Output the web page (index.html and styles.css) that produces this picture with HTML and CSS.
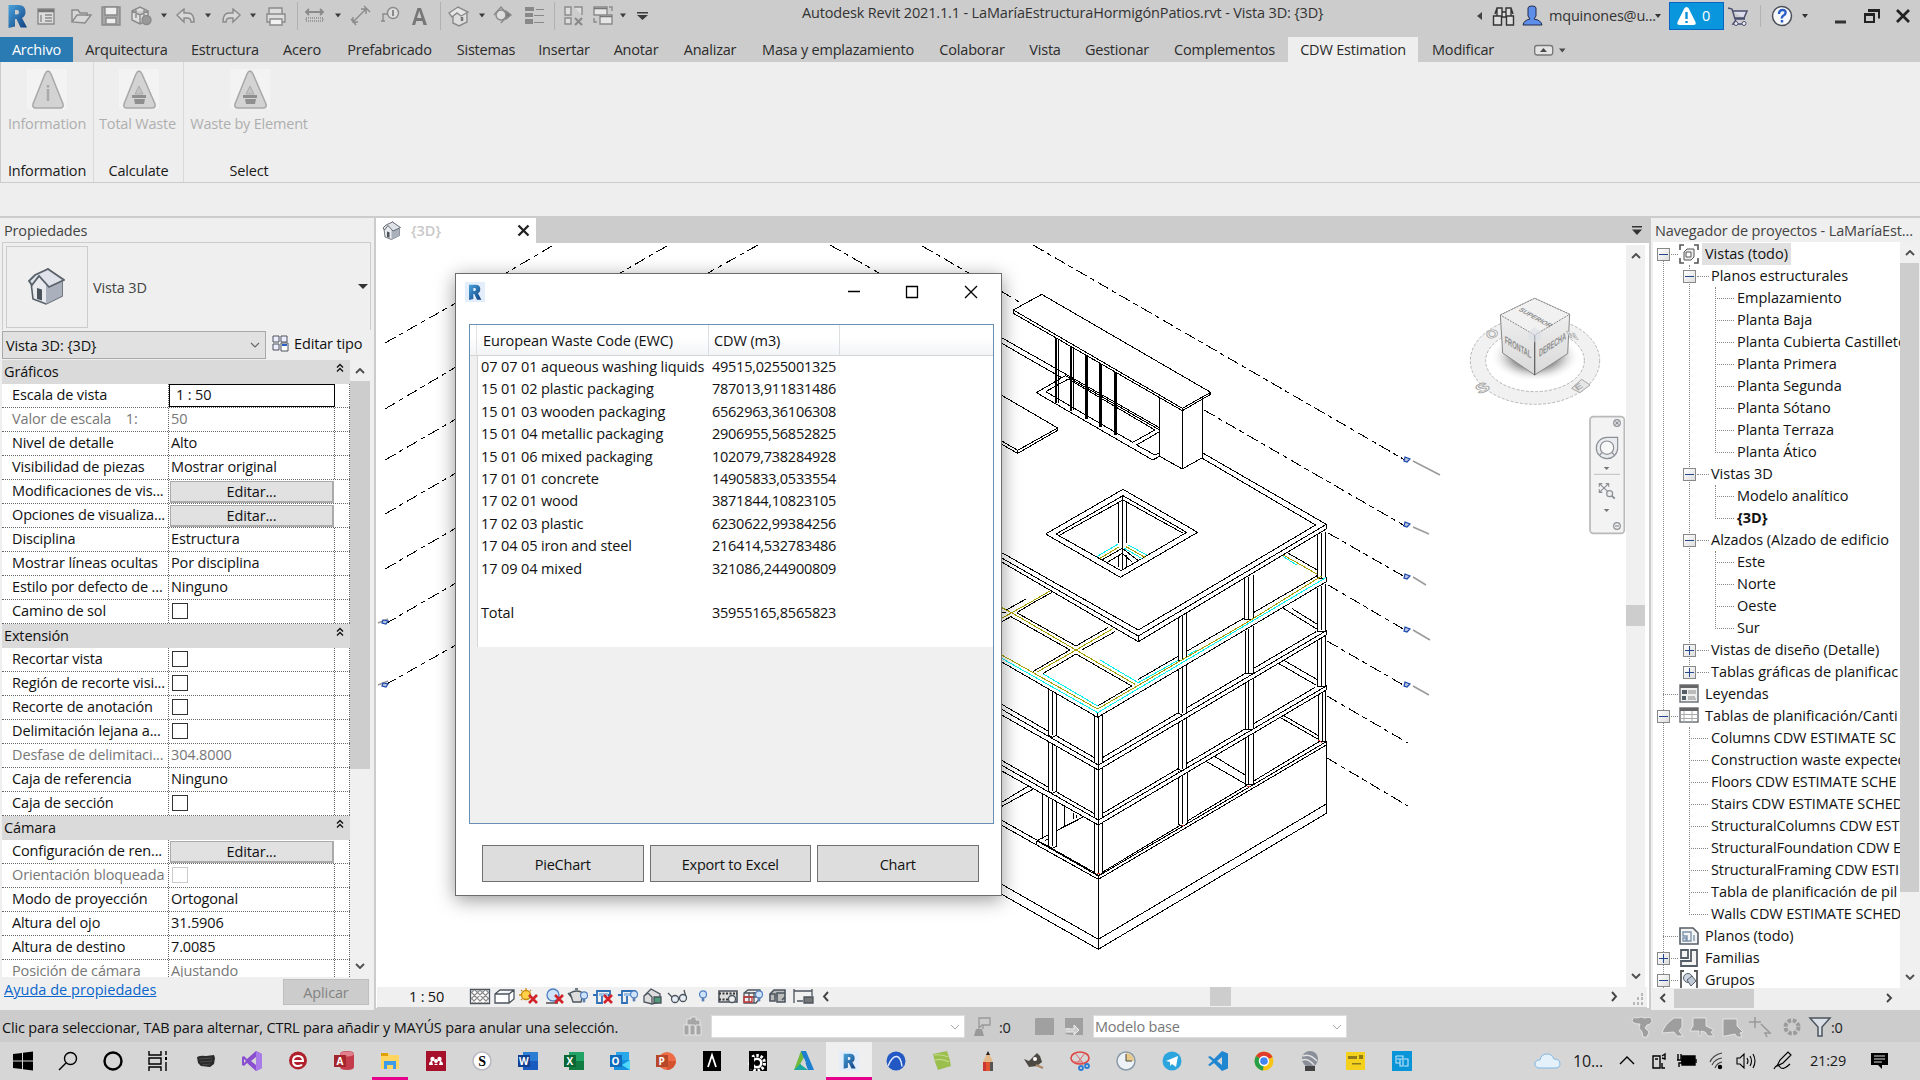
FILE: index.html
```html
<!DOCTYPE html>
<html lang="es">
<head>
<meta charset="utf-8">
<title>Autodesk Revit 2021.1.1</title>
<link rel="stylesheet" href="styles.css">
</head>
<body>
<svg width="0" height="0" class="defs">
  <defs>
    <linearGradient id="rg" x1="0" y1="0" x2="1" y2="1"><stop offset="0" stop-color="#4aa3dc"/><stop offset="1" stop-color="#0f3f80"/></linearGradient>
    <symbol id="rlogo" viewBox="0 0 20 24"><path fill="url(#rg)" fill-rule="evenodd" d="M1 1h10q7 0 7 7 0 4-3.500 6l5 9.500h-6.500l-4-8.500H7.500v7.500l-6.500 1.500zM7.500 6v4.500h2q2 0 2-2.200T9.500 6z"/></symbol>
    <symbol id="house" viewBox="0 0 38 38"><path d="M4 15 6 32 19 37 35 29V15L21 2Z" fill="#e8eaee" stroke="#555d66" stroke-width="1.600"/><path d="M19 18 35 14V29L19 37Z" fill="#aab1bc"/><path d="M10 21l5 1.500v11L10 32z" fill="#4a525c"/><path d="M2 14 8 8 21 2 37 13 22 20 12 9 5 18Z" fill="#dfe2e8" stroke="#59616a" stroke-width="1.800"/></symbol>
    <symbol id="waste" viewBox="0 0 40 40"><path fill="#f3f3f3" d="M0 0h40v40H0z"/><path d="M20 2q1.500 0 3 3l13 30q1 4-3 4H8q-4 0-3-4L17 5q1.500-3 3-3z" fill="#d3d3d3" stroke="#a8a8a8" stroke-width="1.500"/><path d="m16 25 4-8 4 8z" fill="#c2c2c2" stroke="#aaa"/><path fill="#8f8f8f" d="M13 26h14v3H13zM15 30h11l-1 5h-9z"/></symbol>
    <symbol id="up" viewBox="0 0 10 6"><path d="M1 5 5 1 9 5" fill="none" stroke="#505050" stroke-width="1.900"/></symbol>
    <symbol id="dn" viewBox="0 0 10 6"><path d="M1 1 5 5 9 1" fill="none" stroke="#505050" stroke-width="1.900"/></symbol>
    <symbol id="dbl" viewBox="0 0 8 10"><path d="M1 4.500 4 1.500 7 4.500M1 8.500 4 5.500 7 8.500" fill="none" stroke="#111" stroke-width="1.400"/></symbol>
    <symbol id="bulb" viewBox="0 0 10 16"><circle cx="5" cy="5" r="4" fill="#cfe4fb" stroke="#4d7fc0" stroke-width="1.300"/><path d="M3.500 9h3v4h-3z" fill="#5a7fb0"/></symbol>
    <symbol id="redx" viewBox="0 0 10 10"><path d="M1 1 9 9M9 1 1 9" stroke="#d2232a" stroke-width="2.600"/></symbol>
  </defs>
</svg>

<div class="app">
<header class="titlebar">
  <svg class="quick" width="660" height="37">
    <use href="#rlogo" x="7" y="4" width="21" height="24"/>
    <g fill="none" stroke="#8a8a8a" stroke-width="1.400">
      <path d="M38 9h16v15H38z" fill="#ddd"/><path d="M38 10h16M38 11.500h16" stroke="#777"/><path d="M41 15v7M45 15h7M45 18h7M45 21h7"/>
      <path d="M72 22V10h6l2 3h7v3M72 22l5-7h14l-6 8z" fill="#d8d8d8"/>
      <path d="M102 7h18v18h-18z" fill="#a6a6a6"/><path d="M105 7h12v8h-12zM106 18h10v6h-10z" fill="#eee"/>
      <path d="M132 11l8-4 8 4v9l-8 4-8-4zM132 11l8 4 8-4M140 15v9M136 9v9M144 9v9" fill="#dedede"/><circle cx="146.500" cy="20" r="4.500" fill="#999"/>
      <path d="M177 15l7-6v4h4q6 0 6 9h-3q0-4-4-4h-3v4z" fill="#d8d8d8"/>
      <path d="M240 15l-7-6v4h-4q-6 0-6 9h3q0-4 4-4h3v4z" fill="#d8d8d8"/>
      <path d="M269 14V8h13v6M267 14h18v8h-18z" fill="#ddd"/><path d="M270 19h12v6h-12z" fill="#f2f2f2"/>
      <path d="M306 12h17M309 9l-3 3 3 3M320 9l3 3-3 3" stroke-width="1.800"/><path d="M306 18h17v3h-17z" stroke-dasharray="1 1" fill="#ccc"/>
      <path d="M354 21l11-11M353 17v5h5M361 9h5v5M351 19l5 6M364 6l6 6"/>
      <circle cx="393" cy="13" r="5.500" fill="#ddd"/><path d="M388 14h-5v7M381 21h4"/><path d="M393 10v6" stroke="#666"/>
      <path d="M453 15v8l6 3 8-4v-9" fill="#ddd"/><path d="M449 13l9-6 10 5-7 4-4-3-5 4z" fill="#e6e6e6"/><path d="M462 17v4" stroke="#777" stroke-width="2.500"/>
      <circle cx="501" cy="15" r="5" fill="#ddd"/><path d="M494 15l7-8 7 8-7 8" /><path d="M506 11l5 4-5 4z" fill="#777"/>
      <path d="M565 7h6v8h-6zM574 7h8v8M565 18h6v6h-6z" fill="#ddd"/><path d="M575 18l7 7M582 18l-7 7" stroke-width="2.200"/>
      <path d="M594 7h13v8h-13zM600 15h12v9h-12z" fill="#e6e6e6"/><path d="M594 8.500h13M600 16.500h12" stroke="#777"/><path d="M609 7h3v4M597 22h-3v-4"/>
    </g>
    <path d="M412 25 417.500 8h3.500l6 17h-3.500l-1.200-4h-6l-1.200 4zM417 18h4.500l-2.200-7z" fill="#777" fill-rule="evenodd"/>
    <path d="M525 7h9v4h-9zM525 13h8v4h-8zM525 19h8v5h-8zM536 9h8v1h-8zM534 15h10v1h-10zM534 22h10v1h-10z" fill="#888"/>
    <path d="M297.500 2v28M440.500 2v28M554.500 2v28" stroke="#b0b0b0"/>
    <path d="M161 13.500h6l-3 4zM205 13.500h6l-3 4zM250 13.500h6l-3 4zM335 13.500h6l-3 4zM479 13.500h6l-3 4zM620 13.500h6l-3 4zM637 15h11l-5.500 5zM637 12h11v1.500h-11z" fill="#3c3c3c"/>
  </svg>
  <div class="apptitle">Autodesk Revit 2021.1.1 - LaMaríaEstructuraHormigónPatios.rvt - Vista 3D: {3D}</div>
  <svg class="find" width="68" height="37">
    <path d="M6 12v8l-5-4z" fill="#444"/>
    <g fill="#ddd" stroke="#333" stroke-width="1.400"><path d="M19 14l2-6h5v8M37 14l-2-6h-5v8M26 12h4v5h-4zM17.500 16h8v9h-8zM30.500 16h7v9h-7zM21 9v7M35 9v7"/></g>
    <path d="M47 25q1-5 7-6l-2-3V8q0-2 4-2t4 2v8l-2 3q7 1 8 6z" fill="#5d8eea" stroke="#222b4a"/>
  </svg>
  <div class="user">mquinones@u...</div><i class="caret"></i>
  <div class="alert"><svg width="21" height="20"><path d="M10.500 1q2 0 3 3l6 12q1 3-2 3h-14q-3 0-2-3l6-12q1-3 3-3z" fill="#fff"/><path d="M10.500 6v7M10.500 15v2" stroke="#0a92d8" stroke-width="2.400"/></svg><span>0</span></div>
  <svg class="sys" width="195" height="37">
    <path d="M4 8l4 1 3 10h10M8 11h15l-3 7h-9M12 20l-3 4h12" fill="#dde" stroke="#4a4f6e" stroke-width="1.500"/><circle cx="12" cy="23.500" r="2" fill="#eee" stroke="#4a4f6e"/><circle cx="20" cy="23.500" r="2" fill="#eee" stroke="#4a4f6e"/>
    <path d="M36.500 5v22" stroke="#b3b3b3"/>
    <circle cx="58" cy="16" r="9.500" fill="#f6f8fc" stroke="#4b4f57" stroke-width="1.500"/><path d="M55 14q0-4 3.500-4t3 3q0 1.500-2 2.500t-1.500 3M58 20v2.500" fill="none" stroke="#2a5fc8" stroke-width="2.400"/>
    <path d="M78 14h6l-3 4zM111 20.500h11v3h-11z" fill="#333"/>
    <path d="M145 10.500h10v8M141 14.500h9v7.500h-9z" fill="none" stroke="#222" stroke-width="2"/><path d="M144 9h12v3h-12zM140 13h11v3h-11z" fill="#222"/>
    <path d="M173 10l12 12M185 10l-12 12" stroke="#222" stroke-width="2.800"/>
  </svg>
</header>

<nav class="tabs">
  <a class="t-file">Archivo</a><a>Arquitectura</a><a>Estructura</a><a>Acero</a><a>Prefabricado</a><a>Sistemas</a><a>Insertar</a><a>Anotar</a><a>Analizar</a><a>Masa y emplazamiento</a><a>Colaborar</a><a>Vista</a><a>Gestionar</a><a>Complementos</a><a class="t-on">CDW Estimation</a><a>Modificar</a>
  <svg width="60" height="25"><rect x="26.700" y="8.500" width="18" height="9.500" rx="2.500" fill="#e4e4e4" stroke="#777" stroke-width="1.300"/><path d="M32 15h7l-3.500-4zM51 11.500h6.500l-3.200 4z" fill="#4a4a4a"/></svg>
</nav>

<section class="ribbon">
  <div class="panels">
    <div class="rp rp1"><svg width="40" height="40"><path fill="#f3f3f3" d="M0 0h40v40H0z"/><path d="M21 2q1.500 0 3 3l12 30q1 4-3 4H9q-4 0-3-4L18 5q1.500-3 3-3z" fill="#d3d3d3" stroke="#a8a8a8" stroke-width="1.500"/><path d="M21 20v12M21 16v2.500" stroke="#aaa" stroke-width="2.500"/></svg><span>Information</span><b>Information</b></div>
    <div class="rp rp2"><svg width="40" height="40"><use href="#waste"/></svg><span>Total Waste</span><b>Calculate</b></div>
    <div class="rp rp3"><svg width="40" height="40"><use href="#waste"/></svg><span>Waste by Element</span><b>Select</b></div>
  </div>
</section>

<main class="work">
<aside class="props">
  <h2>Propiedades</h2>
  <div class="typesel"><div class="thumb"><svg width="38" height="38"><use href="#house"/></svg></div><span>Vista 3D</span><i class="caret"></i></div>
  <div class="inst"><div class="combo">Vista 3D: {3D}<svg width="10" height="6"><path d="M1 1 5 5 9 1" fill="none" stroke="#666" stroke-width="1.100"/></svg></div>
    <svg width="17" height="17"><path d="M1 1h6v6H1zM9 1h6v6H9zM1 9h6v6H1z" fill="#eef" stroke="#4a525c"/><path d="M9 8h7v8H9z" fill="#fff" stroke="#4a525c"/><path d="M10 10h5" stroke="#2a5fc8" stroke-width="2"/></svg><span>Editar tipo</span></div>
  <div class="gridwrap">
    <div class="grid">
      <div class="gh">Gráficos<svg width="8" height="10"><use href="#dbl"/></svg></div>
      <div class="pr"><span>Escala de vista</span><em class="edit">1 : 50</em></div>
      <div class="pr dim"><span>Valor de escala &nbsp;&nbsp; 1:</span><em>50</em></div>
      <div class="pr"><span>Nivel de detalle</span><em>Alto</em></div>
      <div class="pr"><span>Visibilidad de piezas</span><em>Mostrar original</em></div>
      <div class="pr"><span>Modificaciones de vis...</span><em class="btn">Editar...</em></div>
      <div class="pr"><span>Opciones de visualiza...</span><em class="btn">Editar...</em></div>
      <div class="pr"><span>Disciplina</span><em>Estructura</em></div>
      <div class="pr"><span>Mostrar líneas ocultas</span><em>Por disciplina</em></div>
      <div class="pr"><span>Estilo por defecto de ...</span><em>Ninguno</em></div>
      <div class="pr"><span>Camino de sol</span><em><i class="chk"></i></em></div>
      <div class="gh">Extensión<svg width="8" height="10"><use href="#dbl"/></svg></div>
      <div class="pr"><span>Recortar vista</span><em><i class="chk"></i></em></div>
      <div class="pr"><span>Región de recorte visi...</span><em><i class="chk"></i></em></div>
      <div class="pr"><span>Recorte de anotación</span><em><i class="chk"></i></em></div>
      <div class="pr"><span>Delimitación lejana a...</span><em><i class="chk"></i></em></div>
      <div class="pr dim"><span>Desfase de delimitaci...</span><em>304.8000</em></div>
      <div class="pr"><span>Caja de referencia</span><em>Ninguno</em></div>
      <div class="pr"><span>Caja de sección</span><em><i class="chk"></i></em></div>
      <div class="gh">Cámara<svg width="8" height="10"><use href="#dbl"/></svg></div>
      <div class="pr"><span>Configuración de ren...</span><em class="btn">Editar...</em></div>
      <div class="pr dim"><span>Orientación bloqueada</span><em><i class="chk"></i></em></div>
      <div class="pr"><span>Modo de proyección</span><em>Ortogonal</em></div>
      <div class="pr"><span>Altura del ojo</span><em>31.5906</em></div>
      <div class="pr"><span>Altura de destino</span><em>7.0085</em></div>
      <div class="pr dim"><span>Posición de cámara</span><em>Ajustando</em></div>
    </div>
    <div class="vs pvs"><svg width="10" height="6"><use href="#up"/></svg><div class="thumbbar"></div><svg width="10" height="6"><use href="#dn"/></svg></div>
  </div>
  <div class="pfoot"><a>Ayuda de propiedades</a><div class="apply">Aplicar</div></div>
</aside>

<section class="center">
  <div class="vtabs"><div class="vtab"><svg width="19" height="19"><use href="#house"/></svg><span>{3D}</span><svg width="13" height="13"><path d="M1.500 1.500l10 10M11.500 1.500l-10 10" stroke="#222" stroke-width="2.300"/></svg></div><svg width="12" height="10"><path d="M1 0h10v1.500H1zM1 3.500h10L6 9z" fill="#333"/></svg></div>
  <div class="viewrow">
    <svg class="model" width="1250" height="744" viewBox="376 243 1250 744">
      <g class="axis" fill="none" stroke="#000">
        <path d="M552 246 506 273M667 246 620 273M758 245 708 273M830 245 879 273M922 246 969 273M385 343 456 303M385 409 456 367M385 460 456 419M385 514 456 473M385 569 456 528M385 624 456 583M385 685 456 645"/>
        <path d="M1001 291 1019 302M1033 245 1405 460M1204 410 1405 526M1328 533 1405 577M1328 585 1405 630M1327 641 1405 686M1327 696 1408 743M1327 758 1408 806"/>
      </g>
      <g stroke="#9a9a9a" stroke-width="1.500"><path d="M1413 461 1440 475M1413 527 1429 534M1413 577 1426 585M1413 630 1430 640M1413 686 1429 695M378 623 388 619M378 685 388 681"/></g>
      <g stroke="#1d49b0" stroke-width="1.200" fill="#b9c4dc"><path d="M1405 457l5 2-3 3-3-1zM1405 522l5 2-3 3-3-1zM1405 574l5 2-3 3-3-1zM1405 627l5 2-3 3-3-1zM1405 682l5 2-3 3-3-1zM383 620l5 1-2 3-4-1zM383 683l5 1-2 3-4-1z"/></g>

      <!-- frame below the roof -->
      <g class="ln" transform="translate(1000 600) scale(.33333)">
        <path d="M850 25 952 88M875 25 952 73M835 190 948 255M850 180 950 238M840 352 955 418M852 347 957 408M620 485 735 551M645 470 735 525M865 -140 952 -90"/>
        <path d="M0 610 85 558M0 622 100 567M128 583V718M193 620V680M222 640V658M230 645V655M110 722 252 650M135 722 145 716"/>
        <path class="yl" d="M0 20 33 37 228 150 405 253M5 55 98 3 150 -27M340 85 228 150 110 217M850 -135 952 -77"/>
        <path d="M18 30 33 22 78 -3M50 38 105 5 155 -22M5 65 33 50 210 150 98 215M50 38 228 138 325 82M130 220 228 162 395 258 293 318M245 150 345 95M0 37 18 37"/>
        <path class="cy" d="M130 222 293 318M300 180 415 248 545 175M850 -130 890 -105M565 165 590 150"/>
        <path d="M0 310 295 480 948 95M0 478 295 648 945 262M0 658 295 824 957 425M415 238 955 -75"/>
        <path class="col" d="M283 340V490L295 497 308 490V340M283 500V655L295 662 308 655V500M283 665V820L295 826 308 820V665M145 262V405L157 412 170 405V262M145 425V573L157 580 170 573V425M145 585V738L157 745 170 738V585"/>
        <path class="col" d="M535 40V183H560V40M535 192V340L547 346 560 340V192M535 350V508L547 513 560 508V350M535 512V672L547 678 562 672V505M733 -75V60H760V-75M736 68V220H760V68M736 235V388H760V235M736 400V555H760V400M952 -205V-65H976V-205M952 -50V95H976V-50M952 105V260H976V105M956 270V425H976V270"/>
        <path d="M295 345V820M157 275V405M157 428V573M157 590V738M547 45V180M547 195V340M547 355V508M547 520V672M747 -70V58M747 75V218M747 238V386M747 400V552M965 -200V-65M965 -50V90M965 105V260M967 270V425"/>
        <path fill="#fff" stroke="none" d="M0 162 293 327 979 -67V-50L293 352 0 183ZM0 325 295 495 979 92V107L295 510 0 342ZM0 493 295 660 979 258V272L295 675 0 510Z"/>
        <path d="M0 183 293 352 979 -55V-68M293 340V352M0 325 295 495 979 92V105L295 510 0 342M295 495V510M0 493 295 660 979 258V270L295 675 0 510M295 660V675"/>
        <path class="yl" d="M0 162 293 327 540 183 733 72 965 -72"/>
        <path class="cy" d="M0 172 293 338 979 -68"/>
        <path d="M0 673 110 735V722M110 735 295 838 979 435M110 722 295 828 979 425V640L295 1048 0 880M0 850 295 1018 979 612M295 828V1048"/>
        <path class="rd" d="M292 822h8M545 676h8M742 560h8M955 420l12 8"/>
      </g>

      <!-- roof slab, skylight and lift tower -->
      <g class="ln" transform="translate(1000 230) scale(.33333)">
        <path fill="#fff" stroke="none" d="M0 350 560 645 979 883V897L415 1235 0 993Z"/>
        <path d="M979 883V897L415 1235 0 993M0 965 415 1200 947 885 607 685M979 883 415 1218 0 981M415 1218V1235M610 670 979 883M0 337 185 443"/>
        <path d="M0 493 173 594V601L53 670 0 640M173 594 53 661 0 630M53 661V670"/>
        <path fill="#fff" d="M109 488 196 437 479 600V679L458 690Z"/>
        <path d="M137 485 205 447 465 600 398 637M137 485 398 637M479 605 410 645 465 675 479 668"/>
        <path d="M0 320 480 594"/>
        <path fill="#fff" stroke="none" d="M480 480H606V690L547 716 480 678Z"/>
        <path d="M479 500V679L547 717 607 683V505M547 535V717"/>
        <path class="post" d="M169 325V520M214 350V542M257 376V568M299 400V592M344 424V616"/>
        <path d="M175 325V518M220 350V540M262 376V566M305 400V590M350 424V614"/>
        <path fill="#fff" d="M40 240 125 193 632 487V493L547 542 40 250Z"/><path d="M40 240 547 535 632 487M547 535V717"/>
        <path d="M137 912 369 778 593 907 361 1042ZM168 912 369 797 560 907 363 1022ZM180 915 369 810 548 909M355 815V940M367 797V1020M380 815V940M355 975V1012M380 975V1012M305 990 367 955 412 990M320 998 367 970 395 995"/>
        <path class="cy" d="M290 980 355 942M373 955 425 985M385 945 440 975"/><path class="yl" d="M300 985 357 951M378 950 435 982"/>
      </g>

      <!-- view cube -->
      <g transform="translate(1400 215) scale(.33333)">
        <defs><radialGradient id="sh"><stop offset=".5" stop-color="#999"/><stop offset="1" stop-color="#fff" stop-opacity="0"/></radialGradient><linearGradient id="fc" x1="0" y1="0" x2="0" y2="1"><stop offset="0" stop-color="#f4f4f4"/><stop offset="1" stop-color="#d9d9d9"/></linearGradient></defs>
        <ellipse cx="405" cy="437" rx="194" ry="131" fill="#f1f1f1" stroke="#b5b5b5" stroke-width="3" stroke-dasharray="9 5"/>
        <ellipse cx="405" cy="437" rx="148" ry="93" fill="#fff" stroke="#b5b5b5" stroke-width="3" stroke-dasharray="9 5"/>
        <ellipse cx="405" cy="425" rx="135" ry="75" fill="url(#sh)"/>
        <path d="M301 300 404 250 509 298 503 416 404 480 308 414Z" fill="url(#fc)" stroke="#888" stroke-width="3"/>
        <path d="M301 300 404 250 509 298 404 360Z" fill="#f1f1f1" stroke="#888" stroke-width="3" stroke-dasharray="6 3"/><path d="M404 360V480" stroke="#666" stroke-width="4"/>
        <path d="M404 337l20 14-2 22-18 9-18-9-2-22z" fill="#d9dde4" opacity=".6"/>
        <g class="cube" fill="#8d8d8d"><text transform="matrix(.9 .5 -.85 .6 354 286)">SUPERIOR</text><text transform="matrix(.85 .5 0 1.600 314 384)">FRONTAL</text><text transform="matrix(.82 -.54 0 1.600 417 426)">DERECHA</text></g>
        <g class="comp" fill="#fff" stroke="#a5a5a5" stroke-width="2.500"><text transform="matrix(1.300 -.6 .6 .8 238 538)">S</text><text transform="matrix(1 -.5 .5 .7 268 374)">O</text><text transform="matrix(1 .3 .4 .7 508 367)">N</text></g>
        <path d="M515 520 545 493 570 510 540 533Z" fill="#e6e6e6" stroke="#a5a5a5" stroke-width="3"/><text class="comp" transform="matrix(.7 -.45 .4 .5 532 528)" fill="#aaa">E</text>
      </g>
      <!-- navigation bar -->
      <g transform="translate(1400 215) scale(.33333)" fill="none" stroke="#8c9096" stroke-width="3.500">
        <rect x="570" y="605" width="103" height="350" rx="10" fill="#f3f3f3" stroke="#b9b9b9" stroke-width="5"/>
        <circle cx="651" cy="624" r="10" fill="#eee"/><path d="M646 619l10 10M656 619l-10 10"/>
        <path d="M621 667H653V700A32 32 0 1 1 621 667Z" fill="#e9ebee"/><circle cx="621" cy="698" r="20" fill="#f7f7f7"/><path d="M607 712l-8 8M635 712l8 8"/>
        <path d="M582 778h78" stroke="#c5c5c5"/><path d="M611 756h17l-8 9zM611 882h17l-8 9z" fill="#777" stroke="none"/>
        <path d="M598 806l28 26M626 806l-28 26M598 815v-9h9M617 806h9v9M598 823v9h9"/><circle cx="629" cy="836" r="9" fill="#eee"/><path d="M635 842l9 9" stroke-width="6"/>
        <circle cx="651" cy="933" r="10" fill="#eee"/><path d="M645 933h12"/>
      </g>
    </svg>
    <div class="vs cvs"><svg width="10" height="6"><use href="#up"/></svg><div class="thumbbar"></div><svg width="10" height="6"><use href="#dn"/></svg></div>
  </div>
  <div class="vctl">
    <span>1 : 50</span>
    <svg width="380" height="20" viewBox="466 987 380 20">
      <g fill="none" stroke="#4c545e" stroke-width="1.300">
        <path d="M470.500 989.500h19v14h-19z" fill="#fff"/><path d="M471 993l3-3M471 999l9-9M472 1003l13-13M478 1003l11-11M484 1003l5-5M489 993l-3-3M489 999l-9-9M488 1003l-13-13M482 1003l-11-11M476 1003l-5-5" stroke="#888" stroke-width="1.100"/>
        <path d="M495 994l5-4h14v9l-5 4h-14zM495 994h14l5-4M509 994v9" fill="#fff"/>
        <circle cx="526" cy="995" r="4.500" fill="#ffd24a" stroke="#c98a12"/><path d="M526 988v2M519 995h2M521 990l1 1M531 990l-1 1M521 1000l1-1" stroke="#c98a12"/>
        <circle cx="553" cy="995" r="6" fill="#cfe4fb" stroke="#4d7fc0"/><path d="M546 1003h12" stroke="#777" stroke-width="2"/>
        <path d="M570 993l3 9h8l2-9q-6-4-13 0zM575 989h3M568 993l4 5" fill="#ddd"/>
        <path d="M593 995h4v8h5v-8h7v6M597 995v-4h13v4" stroke="#2f6fb5" stroke-width="1.800"/><path d="M599 993h9v3h-9z" fill="#9cc0e6" stroke="none"/>
        <path d="M618 995h4v8h5v-8h7v6M622 995v-4h13v4" stroke="#2f6fb5" stroke-width="1.800"/><path d="M624 993h8v3h-8z" fill="#9cc0e6" stroke="none"/>
        <path d="M644 996l7-7 9 5v8l-8 2-8-2zM644 996l4-3 4 4v6" fill="#ddd"/><path d="M654 997h7v6h-7z" fill="#4d9a78"/>
        <path d="M668 993l6 6M684 990l2 7"/><circle cx="675" cy="999" r="3.500" fill="#e8eef5"/><circle cx="683" cy="998" r="3.500" fill="#e8eef5"/>
        <path d="M719 991h18v11h-18z" fill="#ddd" stroke-width="1.600"/><path d="M719 993.500h18M719 999.500h10" stroke="#333" stroke-dasharray="2 1.500" stroke-width="2"/><circle cx="732" cy="999" r="3.500" fill="#eee"/>
        <path d="M744 993l4-3h12v8l-4 5h-12zM744 997h14M749 992v11M754 992v11M744 993h14"/><path d="M744 997h8v5h-8z" stroke="#c33"/>
        <path d="M770 994l4-4h11v7l-3 3M770 994h5v7h-5zM777 993h8v9h-8z" fill="#bbb" stroke-width="1.600"/>
        <path d="M794 989v14M812 989v7M794 991h18M797 1001h6" /><path d="M804 997h9v6h-9z" fill="#777"/>
      </g>
      <use href="#redx" x="528" y="994" width="10" height="10"/><use href="#redx" x="554" y="994" width="10" height="10"/><use href="#redx" x="603" y="994" width="10" height="10"/>
      <use href="#bulb" x="579" y="991" width="10" height="14"/><use href="#bulb" x="629" y="990" width="10" height="14"/><use href="#bulb" x="698" y="990" width="10" height="14"/><use href="#bulb" x="754" y="990" width="10" height="14"/>
      <path d="M828 992l-4 4.500 4 4.500" fill="none" stroke="#444" stroke-width="1.900"/>
    </svg>
    <div class="hthumb"></div>
    <svg class="hr" width="34" height="20"><path d="M2 5l4 4.500-4 4.500" fill="none" stroke="#444" stroke-width="1.900"/><path d="M31 6h2v3h-2zM27 10h2v3h-2zM31 10h2v3h-2zM23 15h2v3h-2zM27 15h2v3h-2zM31 15h2v3h-2z" fill="#b8b8b8"/></svg>
  </div>
</section>

<aside class="browser">
  <h2>Navegador de proyectos - LaMaríaEst...</h2>
  <div class="trow">
  <ul class="tree">
    <li><p><i class="bx"></i><u></u><svg width="20" height="20"><path d="M1 6V1h4M15 1h4v5M1 14v5h4M19 14v5h-4" fill="none" stroke="#555" stroke-width="1.600"/><path d="M5 8l3-3h7v8l-3 3H5z" fill="#eee" stroke="#555"/><path d="M7 8h5v5H7z" fill="#fff" stroke="#555"/></svg><span class="sel">Vistas (todo)</span></p>
      <ul>
        <li><p><i class="bx"></i><u></u><span>Planos estructurales</span></p>
          <ul><li><p><u></u>Emplazamiento</p></li><li><p><u></u>Planta Baja</p></li><li><p><u></u>Planta Cubierta Castillete</p></li><li><p><u></u>Planta Primera</p></li><li><p><u></u>Planta Segunda</p></li><li><p><u></u>Planta Sótano</p></li><li><p><u></u>Planta Terraza</p></li><li><p><u></u>Planta Ático</p></li></ul></li>
        <li><p><i class="bx"></i><u></u><span>Vistas 3D</span></p>
          <ul><li><p><u></u>Modelo analítico</p></li><li><p><u></u><strong>{3D}</strong></p></li></ul></li>
        <li><p><i class="bx"></i><u></u><span>Alzados (Alzado de edificio</span></p>
          <ul><li><p><u></u>Este</p></li><li><p><u></u>Norte</p></li><li><p><u></u>Oeste</p></li><li><p><u></u>Sur</p></li></ul></li>
        <li><p><i class="bx pl"></i><u></u><span>Vistas de diseño (Detalle)</span></p></li>
        <li><p><i class="bx pl"></i><u></u><span>Tablas gráficas de planificac</span></p></li>
      </ul></li>
    <li><p><u class="long"></u><svg width="20" height="20"><path d="M1 1h18v17H1z" fill="#eee" stroke="#70747a" stroke-width="1.500"/><path d="M1 1h18v3H1z" fill="#666"/><path d="M3 6h5v4H3zM3 12h4v4H3z" fill="#555d68"/><path d="M9 7h8M9 9h8M9 13h7M9 15h8" stroke="#888"/></svg><span>Leyendas</span></p></li>
    <li><p><i class="bx"></i><u></u><svg width="20" height="20"><path d="M1 2h18v14H1z" fill="#fff" stroke="#70747a" stroke-width="1.500"/><path d="M1 2h18v3H1z" fill="#666"/><path d="M1 8.500h18M1 12.500h18M5 5v11M13 5v11" stroke="#aaa"/></svg><span>Tablas de planificación/Canti</span></p>
      <ul><li class="cap"><p><u></u>Columns CDW ESTIMATE SC</p></li><li><p><u></u>Construction waste expected</p></li><li class="cap"><p><u></u>Floors CDW ESTIMATE SCHE</p></li><li class="cap"><p><u></u>Stairs CDW ESTIMATE SCHED</p></li><li class="cap"><p><u></u>StructuralColumns CDW EST</p></li><li class="cap"><p><u></u>StructuralFoundation CDW E</p></li><li class="cap"><p><u></u>StructuralFraming CDW ESTI</p></li><li><p><u></u>Tabla de planificación de pil</p></li><li class="cap"><p><u></u>Walls CDW ESTIMATE SCHED</p></li></ul></li>
    <li><p><u class="long"></u><svg width="20" height="20"><path d="M1 2h13l5 5v11H1z" fill="#f4f4f4" stroke="#555d66" stroke-width="1.600"/><path d="M4 6h8v9H8v-5H4zM4 12h3v3H4zM15 9v6" fill="none" stroke="#7d93ac" stroke-width="1.400"/></svg><span>Planos (todo)</span></p></li>
    <li><p><i class="bx pl"></i><u></u><svg width="20" height="20"><path d="M2 2h7v8H2zM12 2h6v16H2v-5h10z" fill="#f4f4f4" stroke="#555d66" stroke-width="1.800"/></svg><span>Familias</span></p></li>
    <li><p><i class="bx"></i><u></u><svg width="20" height="20"><path d="M5 1H2v18h3M15 1h3v18h-3" fill="none" stroke="#555" stroke-width="1.800"/><circle cx="9" cy="8" r="4.500" fill="#ccd5e0" stroke="#555d66"/><path d="M8 10l5-4 4 5-5 5z" fill="#c0cad6" stroke="#555d66"/></svg><span>Grupos</span></p></li>
  </ul>
  <div class="vs bvs"><svg width="10" height="6"><use href="#up"/></svg><div class="thumbbar"></div><svg width="10" height="6"><use href="#dn"/></svg></div>
  </div>
  <div class="hs"><svg width="7" height="10"><path d="M6 1 2 5l4 4" fill="none" stroke="#444" stroke-width="1.900"/></svg><div></div><svg width="7" height="10"><path d="M1 1l4 4-4 4" fill="none" stroke="#444" stroke-width="1.900"/></svg></div>
</aside>

<section class="dialog">
  <div class="dbar"><div class="dr"><svg width="14" height="16"><use href="#rlogo"/></svg></div>
    <svg width="140" height="30"><g fill="none" stroke="#000" stroke-width="1.300"><path d="M3 14.500h12M61.500 9.500h11v11h-11zM120 9l12 12M132 9l-12 12"/></g></svg></div>
  <div class="dgrid">
    <div class="dhead"><i></i><span>European Waste Code (EWC)</span><span>CDW (m3)</span></div>
    <div class="dbody">
      <div><span>07 07 01 aqueous washing liquids</span><span>49515,0255001325</span></div>
      <div><span>15 01 02 plastic packaging</span><span>787013,911831486</span></div>
      <div><span>15 01 03 wooden packaging</span><span>6562963,36106308</span></div>
      <div><span>15 01 04 metallic packaging</span><span>2906955,56852825</span></div>
      <div><span>15 01 06 mixed packaging</span><span>102079,738284928</span></div>
      <div><span>17 01 01 concrete</span><span>14905833,0533554</span></div>
      <div><span>17 02 01 wood</span><span>3871844,10823105</span></div>
      <div><span>17 02 03 plastic</span><span>6230622,99384256</span></div>
      <div><span>17 04 05 iron and steel</span><span>216414,532783486</span></div>
      <div><span>17 09 04 mixed</span><span>321086,244900809</span></div>
      <div></div>
      <div><span>Total</span><span>35955165,8565823</span></div>
      <div></div>
    </div>
  </div>
  <div class="dbtns"><div>PieChart</div><div>Export to Excel</div><div>Chart</div></div>
</section>
</main>

<footer class="status">
  <span class="msg">Clic para seleccionar, TAB para alternar, CTRL para añadir y MAYÚS para anular una selección.</span>
  <svg width="22" height="22"><path d="M5 8V3h4V1h5v3h4v6M2 9h5v10H2zM8 9h5v10H8zM14 9h5v10h-5z" fill="#a6a6a6" stroke="#e6e6e6" stroke-width=".9"/></svg>
  <div class="scombo c1"><svg width="10" height="6"><path d="M1 1 5 5 9 1" fill="none" stroke="#aaa"/></svg></div>
  <svg width="20" height="22"><path d="M6 2h11v7H9l-3 3zM10 9v4" fill="none" stroke="#999" stroke-width="1.300"/><path d="M1 20l2-7h6l2 7z" fill="#999"/></svg>
  <span class="z">:0</span>
  <svg class="g2" width="52" height="22"><path d="M0 3q0-1 2-1h16q1 0 1 1v16H0z" fill="#a0a0a0"/><path d="M30 2h18v17H38l-8-1 5-6h-5z" fill="#a0a0a0"/><path d="M31 13h8v-4l5 5-5 5v-3h-8" fill="#ccc" stroke="#eee"/></svg>
  <div class="scombo c2">Modelo base<svg width="10" height="6"><path d="M1 1 5 5 9 1" fill="none" stroke="#aaa"/></svg></div>
  <svg class="g3" width="210" height="24"><g fill="#9e9e9e" stroke="#eee" stroke-width=".8"><path d="M1 5q2-4 5-2 4-2 8 0 6-2 7 2 0 4-5 5l-2 3 4 4-2 5h-4l-1-5-3-4 1-4q-8 0-8-4zM31 18q2-8 12-15h8v9l-3 4 4 5h-6l-3-4zM62 3h13v8l8 4-3 2 3 4h-6l-3-4-4-1v5h-2v-5h-9l3-5zM92 4h14v7l6 6-3 1 2 4h-5l-2-3-10 2h-2z"/><path d="M124 2v11M118 7h12M130 9l9 9-5 0 2 4" fill="none" stroke="#999" stroke-width="1.500"/></g><circle cx="161" cy="12" r="6.500" fill="none" stroke="#9a9a9a" stroke-width="4" stroke-dasharray="3.500 1.600"/><path d="M179 3h20l-8 9v9h-4v-9z" fill="#dbe0e6" stroke="#4c545e" stroke-width="1.500"/></svg>
  <span class="z">:0</span>
</footer>

<footer class="taskbar">
  <div class="st"><svg viewBox="0 0 20 20"><path d="M0 3 9 2v7.500H0zM10 1.800 20 .5v9H10zM0 10.500h9V18l-9-1zM10 10.500h10v9L10 18.200z"/></svg></div>
  <div class="st"><svg viewBox="0 0 20 20" fill="none" stroke="#000" stroke-width="1.400"><circle cx="12.500" cy="7.500" r="6"/><path d="M8 12l-7 7"/></svg></div>
  <div class="st"><svg viewBox="0 0 20 20"><circle cx="10" cy="10" r="8.500" fill="none" stroke="#000" stroke-width="2.400"/></svg></div>
  <div class="st last"><svg viewBox="0 0 20 20" fill="none" stroke="#000" stroke-width="1.400"><path d="M1 0v4h12V0M1 7h12v6H1zM1 20v-4h12v4M18 0v4M18 11v9"/><path d="M17 6h2v3h-2z" fill="#000" stroke="none"/></svg></div>
  <div class="tk"><svg viewBox="0 0 20 20"><path d="M1 6q4-2 9-1l8-1 1 3-1 6-4 3-9-1-3-3z" fill="#2a2a2a"/><path d="M3 8l13-1M4 11l12-1M6 14l8-1" stroke="#555" stroke-width=".8"/></svg></div>
  <div class="tk"><svg viewBox="0 0 20 20"><path d="M14 0l6 3v14l-6 3L5 12l-3 3-2-1V6l2-1 3 3zM14 6l-5 4 5 4zM2 8v4l2-2z" fill="#8a4fd0" fill-rule="evenodd"/><path d="M14 0l6 3v14l-6 3z" fill="#a97be8"/></svg></div>
  <div class="tk"><svg viewBox="0 0 20 20"><circle cx="10" cy="9.500" r="9" fill="#b0202c"/><path d="M5 10h10q0-5-5-5t-5 5 5 5q3 0 4-1.500" fill="none" stroke="#fff" stroke-width="2"/></svg></div>
  <div class="tk"><svg viewBox="0 0 20 20"><path d="M6 3q0-3 7-3t7 3v13q0 3-7 3t-7-3z" fill="#c43b4b"/><ellipse cx="13" cy="3" rx="7" ry="2.500" fill="#e0808c"/><path d="M0 4h12v12H0z" fill="#a4262c"/><text x="2.500" y="14" class="ol">A</text></svg></div>
  <div class="tk act"><svg viewBox="0 0 20 20"><path d="M1 2h7l2 2h9v14H1z" fill="#ffd561"/><path d="M1 2h7v3H1z" fill="#e0a008"/><path d="M4 18v-8h12v8h-3v-4H7v4z" fill="#3d9be9"/></svg></div>
  <div class="tk"><svg viewBox="0 0 20 20"><path d="M0 0h20v20H0z" fill="#a6102a"/><g fill="#fff"><circle cx="6.500" cy="8" r="2.200"/><circle cx="13.500" cy="8" r="2.200"/><circle cx="10" cy="10" r="2"/><path d="M3 14q0-4 3-4l1 4zM17 14q0-4-3-4l-1 4zM8 14q2-3 4 0z"/></g></svg></div>
  <div class="tk"><svg viewBox="0 0 20 20"><circle cx="10" cy="10" r="9" fill="#fff" stroke="#b9b9c4" stroke-width="1.600"/><text x="6.200" y="15" class="ser">S</text></svg></div>
  <div class="tk"><svg viewBox="0 0 20 20"><path d="M5 1h15v18H5z" fill="#2b7cd3"/><path d="M5 10h15v9H5z" fill="#185abd"/><path d="M0 4h12v12H0z" fill="#103f91"/><text x="1" y="14" class="ol">W</text></svg></div>
  <div class="tk"><svg viewBox="0 0 20 20"><path d="M5 1h15v18H5z" fill="#21a366"/><path d="M5 10h15v9H5z" fill="#107c41"/><path d="M0 4h12v12H0z" fill="#0b6635"/><text x="2.500" y="14" class="ol">X</text></svg></div>
  <div class="tk"><svg viewBox="0 0 20 20"><path d="M6 1h13v10H6z" fill="#28a8ea"/><path d="M4 9h16v10H4z" fill="#1490df"/><path d="M20 9v10l-8-5z" fill="#50d9ff"/><path d="M0 4h12v12H0z" fill="#0f6cbd"/><text x="1.500" y="14" class="ol">O</text></svg></div>
  <div class="tk"><svg viewBox="0 0 20 20"><circle cx="11" cy="10" r="9" fill="#ed6c47"/><path d="M11 10h9a9 9 0 0 1-9 9z" fill="#d35230"/><path d="M0 4h12v12H0z" fill="#b7472a"/><text x="2.500" y="14" class="ol">P</text></svg></div>
  <div class="tk"><svg viewBox="0 0 20 20"><path d="M1 0h18v20H1z"/><path d="M6 16 10 4l4 12" fill="none" stroke="#fff" stroke-width="1.800"/></svg></div>
  <div class="tk"><svg viewBox="0 0 20 20"><path d="M1 0h18v20H1z"/><circle cx="9" cy="12" r="7.500" fill="none" stroke="#fff" stroke-width="3" stroke-dasharray="2.500 1.800"/><circle cx="9" cy="12" r="5.500" fill="#fff"/><circle cx="9" cy="12" r="3"/><path d="M1 6h5v12H1z"/></svg></div>
  <div class="tk"><svg viewBox="0 0 20 20"><path d="M7 0h5l-7 19H0z" fill="#6fb93b"/><path d="M7 0h5l8 19h-6z" fill="#1c7fd0"/><path d="M0 19l6-6 8 6z" fill="#1aa8a0"/><path d="M6 13l4-6 2 5z" fill="#d4d4d4"/></svg></div>
  <div class="tk act on"><svg viewBox="0 0 20 20"><path d="M0 0h20v20H0z" fill="#e3eefa"/><use href="#rlogo" x="4" y="2" width="13" height="16"/></svg></div>
  <div class="tk"><svg viewBox="0 0 20 20"><circle cx="10" cy="10" r="9.500" fill="#2257c4"/><path d="M2 15Q6 5 11 5.500q4 1 5 10" fill="none" stroke="#dfe9ff" stroke-width="1.500"/></svg></div>
  <div class="tk"><svg viewBox="0 0 20 20"><path d="M1 3l14-3q3 8 4 15l-13 4Q3 12 1 3z" fill="#9bbf4d"/><path d="M2 4q8-1 14 2M3 9q7-2 14 2" stroke="#c5da8a" stroke-width="1.200" fill="none"/></svg></div>
  <div class="tk"><svg viewBox="0 0 20 20"><path d="M10 0l5 11v9H5v-9z" fill="#e3b98a"/><path d="M10 0l2 4H8z" fill="#222"/><path d="M5 11h3v9H5z" fill="#c33"/><path d="M8 11h4v9H8z" fill="#e0532f"/><path d="M12 11h3v9h-3z" fill="#555"/></svg></div>
  <div class="tk"><svg viewBox="0 0 20 20"><path d="M0 8l5 2 8-8 3 3 2 6-5 4-8 1z" fill="#4c4842"/><circle cx="11" cy="8" r="2" fill="#fff"/><path d="M12 14l7 3" stroke="#a86" stroke-width="2"/></svg></div>
  <div class="tk"><svg viewBox="0 0 20 20" fill="none"><ellipse cx="10" cy="7" rx="9" ry="6" stroke="#e04545" stroke-width="1.600"/><path d="M5 2l9 11M15 2l-7 9M3 11h9" stroke="#d66"/><circle cx="11" cy="17" r="2" stroke="#2b7cd3" stroke-width="1.800"/><circle cx="17" cy="15" r="2" stroke="#2b7cd3" stroke-width="1.800"/></svg></div>
  <div class="tk"><svg viewBox="0 0 20 20"><circle cx="10" cy="10" r="9" fill="#edf2f6" stroke="#8a9aa8" stroke-width="1.500"/><path d="M10 10V2a8 8 0 0 1 8 8z" fill="#e8c98a"/><path d="M10 3v7h6" fill="none" stroke="#444"/></svg></div>
  <div class="tk"><svg viewBox="0 0 20 20"><circle cx="10" cy="10" r="9.500" fill="#2ca5df"/><path d="M4 10l12-5-2 11-4-3-2 2v-4z" fill="#fff"/></svg></div>
  <div class="tk"><svg viewBox="0 0 20 20"><path d="M14 0l6 2.500v15L14 20 6 12l-4 3-2-1 4.500-4L0 6l2-1 4 3zM14 6l-5 4 5 4z" fill="#1f86d2" fill-rule="evenodd"/></svg></div>
  <div class="tk"><svg viewBox="0 0 20 20"><circle cx="10" cy="10" r="9.500" fill="#f9c513"/><path d="M10 10 2 5a9.500 9.500 0 0 1 16.500 1z" fill="#e03b2c"/><path d="M10 10 2 5a9.500 9.500 0 0 0 7 14.500z" fill="#28a04a"/><circle cx="10" cy="10" r="4.500" fill="#4285f4" stroke="#fff" stroke-width="1.400"/></svg></div>
  <div class="tk"><svg viewBox="0 0 20 20"><circle cx="10" cy="8" r="8" fill="#8a8f9a"/><path d="M3 5q7-3 14 5M2 9q6-2 12 5" stroke="#e2e2e2" stroke-width="1.400" fill="none"/><path d="M5 15h10v5H5z" fill="#444"/></svg></div>
  <div class="tk"><svg viewBox="0 0 20 20"><path d="M0 1h19v18H0z" fill="#f3d11c"/><path d="M2 5h9v3H2zM13 4h4v4h-4zM6 12h9v1.500H6z" fill="#8f7b1a"/></svg></div>
  <div class="tk"><svg viewBox="0 0 20 20"><path d="M0 0h20v20H0z" fill="#0a95d8"/><path d="M4 5h7v3M4 5v7h4M8 8h3v7H8zM12 8h4v7h-4M5 8h3" fill="none" stroke="#bfe6fa" stroke-width="1.100"/></svg></div>
  <svg class="tray1" width="30" height="22"><path d="M7 18q-5 0-5-4t5-4q1-6 7-6 5 0 7 5 6 0 6 5 0 4-5 4z" fill="#e4f1fb" stroke="#7fb8e6"/></svg>
  <span class="temp">10...</span>
  <svg class="tray2" width="184" height="24" fill="none" stroke="#000" stroke-width="1.400">
    <path d="M4 15l7-7 7 7"/><path d="M37 7h7v12h-7zM46 7l3-2v5l-3-1M39 10h3M46 14v5h3"/>
    <path d="M66 7h13v9H66z" fill="#000"/><path d="M80 10v4M62 5v6M65 5v6M61 11h5v3h-3v4"/>
    <path d="M94 13q3-7 12-9M96 16q3-6 10-7M99 19q2-5 7-6" stroke="#444" stroke-width="1.200"/><circle cx="104" cy="18" r="1.500" fill="#000"/>
    <path d="M121 9h3l4-4v14l-4-4h-3zM131 9q2 3 0 6M134 7q3 5 0 10M137 5q4 7 0 14" stroke-width="1.100"/>
    <path d="M161 17l3-6 8-8 3 3-8 8zM158 20q3-6 6-2t10-3" stroke-width="1.200"/>
  </svg>
  <span class="clock">21:29</span>
  <svg class="tray3" width="22" height="22"><path d="M2 3h17v12h-6v4l-4-4H2z"/><path d="M5 6h11M5 9h11M5 12h8" stroke="#ddd"/></svg>
</footer>
</div>
</body>
</html>
```
FILE: styles.css
```css
*{box-sizing:border-box}
body{margin:0;font:14.5px/20px "Open Sans","Noto Sans",sans-serif;letter-spacing:-.2px;color:#1a1a1a;background:#ccc;overflow:hidden}
h2,p,ul{margin:0;padding:0;font-weight:400}
ul{list-style:none}
svg{display:block;flex:none}
.defs{position:absolute}
.app{width:1920px;height:1080px;display:grid;grid-template-rows:37px 25px 156px 792px 32px 38px;white-space:nowrap}
.caret{width:0;height:0;border:4px solid transparent;border-top-color:#333;border-bottom:0}

.titlebar{display:flex;align-items:flex-start;background:#ccc;color:#333}
.apptitle{width:816px;padding:3px 0 0 142px;letter-spacing:-.16px}
.user{width:110px;padding:6px 0 0 5px}
.titlebar .caret{margin:14px 0 0 1px;border-width:4px 3.500px 0}
.alert{width:55px;height:28px;margin:2px 0 0 8px;border:1px solid #0a64c4;background:#0a96dc;color:#fff;display:flex;align-items:center;gap:5px;padding-left:6px}
.sys{margin-left:0}

.tabs{display:flex;background:#ccc;color:#2b2b2b}
.tabs a{text-align:center;line-height:25px;width:90px}
.tabs .t-file{width:73px;background:#2a7ab3;color:#fff}
.tabs .t-on{width:130px;background:#eee}
.tabs a:nth-child(2){width:107px}
.tabs a:nth-child(4){width:64px}
.tabs a:nth-child(5){width:111px}
.tabs a:nth-child(6){width:82px}
.tabs a:nth-child(7){width:74px}
.tabs a:nth-child(8){width:70px}
.tabs a:nth-child(9){width:78px}
.tabs a:nth-child(10){width:178px}
.tabs a:nth-child(12){width:56px}
.tabs a:nth-child(13){width:88px}
.tabs a:nth-child(14){width:127px}

.ribbon{background:#eee;border-bottom:2px solid #ccc}
.panels{display:flex;height:121px;border-bottom:1px solid #ccc;border-left:1px solid #ccc}
.rp{display:flex;flex-direction:column;align-items:center;padding-top:7px;border-right:1px solid #d9d9d9}
.rp span{margin-top:4px;color:#aeaeae;line-height:22px}
.rp b{margin-top:25px;font-weight:400;line-height:22px}
.rp1{width:93px}.rp1 svg{margin-left:0}
.rp2{width:90px}.rp2 svg{margin-left:1px}
.rp2 span{margin-left:-2px}
.rp3{width:130px;border:0}.rp3 svg{margin-left:2px}

.work{display:grid;grid-template-columns:374px 1277px 269px;position:relative;min-height:0}
.work h2{font-size:14.5px;height:24px;line-height:25px;padding-left:4px;color:#444}
.browser h2{letter-spacing:-.14px}
.props{background:#efefef;display:flex;flex-direction:column;min-height:0;letter-spacing:-.14px}
.typesel{height:88px;margin:0 3px 0 2px;width:369px;border:1px solid #ccc;border-bottom:0;display:flex;align-items:center}
.thumb{width:82px;height:82px;margin-left:3px;border:1px solid #ccc;display:grid;place-items:center}
.thumb svg{margin:-2px 0 0 -3px}
.typesel span{margin-left:5px;flex:1;color:#444;padding-top:2px}
.typesel .caret{border-width:5px 5px 0;margin-right:2px}
.inst{display:flex;height:30px;align-items:flex-start;color:#111}
.combo{width:264px;height:28px;margin:1px 0 0 2px;border:1px solid #a9a9a9;background:#e1e1e1;line-height:27px;padding:0 5px 0 3px;display:flex;justify-content:space-between;align-items:center}
.inst>svg{margin:5px 5px 0 6px}
.inst>span{line-height:27px}
.gridwrap{display:flex;height:617px;margin-left:2px;width:368px}
.grid{width:348px;background:#fff;overflow:hidden;color:#111}
.gh{height:24px;background:#dadada;line-height:23px;padding:0 6px 0 2px;display:flex;justify-content:space-between}
.gh svg{margin-top:3px}
.pr{height:24px;display:grid;grid-template-columns:167px 166px 15px;border-bottom:1px dotted #666;line-height:22px}
.pr::after{content:"";border-right:1px dotted #666}
.pr span{padding-left:10px;border-right:1px dotted #666}
.pr em{font-style:normal;padding-left:2px;border-right:1px dotted #666;display:flex;height:23px}
.pr .edit{border:1px solid #000;padding-left:6px;line-height:20px}
.pr .btn{background:#e1e1e1;border:1px solid #aaa;border-width:1px 2px 2px 1px;justify-content:center;margin:1px 1px 0;padding:0;height:22px;line-height:20px}
.dim,.dim em{color:#777}
.chk{width:16px;height:16px;border:1px solid #333;margin:3px 0 0 1px}
.dim .chk{border-color:#ccc}
.vs{background:#f0f0f0;display:flex;flex-direction:column;align-items:center;justify-content:space-between;padding:8px 0}
.thumbbar{background:#cdcdcd;width:100%}
.pvs{width:20px}
.pvs .thumbbar{height:388px;margin:7px 0 auto}
.pfoot{display:flex;justify-content:space-between;padding:2px 5px 0 4px}
.pfoot a{color:#0a66cc;text-decoration:underline;line-height:22px;letter-spacing:.03px}
.apply{width:86px;height:26px;background:#ccc;border:1px solid #bfbfbf;color:#838383;text-align:center;line-height:26px}

.center{border:2px solid #ccc;border-width:0 2px;background:#fff;display:flex;flex-direction:column;height:790px}
.vtabs{height:25px;background:#ccc;display:flex;align-items:center;justify-content:space-between;padding-right:6px}
.vtab{width:160px;height:25px;background:#fff;display:flex;align-items:center;padding:0 6px}
.vtab span{flex:1;padding-left:10px;color:#c9c9c9;font-weight:600;letter-spacing:0}
.viewrow{display:flex;height:744px}
.axis{stroke-dasharray:12 4 5 4;shape-rendering:crispEdges}
.ln{fill:none;stroke:#000;shape-rendering:crispEdges}
.ln path{vector-effect:non-scaling-stroke}
.ln .col{fill:#fff}
.ln .post{stroke-width:2px}
.ln .yl{stroke:#a8a000}
.ln .cy{stroke:#00f0f0}
.ln .rd{stroke:#e04020}
.cube{font:700 20px "Liberation Sans",sans-serif;letter-spacing:0}
.comp{font:700 40px "Liberation Sans",sans-serif}
.cvs{width:19px;margin-top:2px;height:742px}
.cvs .thumbbar{height:21px;margin:346px 0 auto}
.vctl{height:20px;margin-left:1px;width:1270px;background:#f0f0f0;display:flex;color:#111;box-shadow:0 1px #ccc}
.vctl span{width:89px;padding-left:32px}
.hthumb{width:21px;height:19px;margin-left:364px;background:#cdcdcd}
.hr{margin-left:379px}

.browser{background:#efefef;display:flex;flex-direction:column;min-width:0}
.trow{display:flex;height:746px;margin-left:2px}
.tree{width:247px;height:746px;background:#fff;overflow:hidden;position:relative;padding:1px 0 0 10px;color:#111;letter-spacing:-.02px}
.tree .cap{letter-spacing:-.1px}
.tree ul{position:relative;padding-left:26px}
.tree p{height:22px;display:flex;align-items:center;line-height:22px}
.tree ul::before{content:"";position:absolute;left:26px;top:0;bottom:10px;border-left:1px dotted #888}
.tree::before{content:"";position:absolute;left:10px;top:18px;bottom:0;border-left:1px dotted #888}
.tree u{width:19px;margin-right:3px;border-top:1px dotted #888;flex:none}
.bx{width:13px;height:13px;margin:1px 1px 0 -6px;border:1px solid #888;background:linear-gradient(135deg,#fff,#ddd);flex:none;position:relative;z-index:1}
.bx::before{content:"";position:absolute;left:1px;top:5px;width:9px;height:1px;background:#24468c}
.pl::after{content:"";position:absolute;left:5px;top:1px;width:1px;height:9px;background:#24468c}
.tree .bx+u{width:12px;margin-right:2px}
.tree>li>p>.bx+u{width:7px;margin-right:1px}
.tree u.long{width:15px;margin-right:1px}
.tree>li>p>span{margin-left:3px;padding:0 3px}
.sel{background:#e1e1e1}
.bvs{width:19px}
.bvs .thumbbar{height:629px;margin:7px 0 auto}
.hs{display:flex;height:20px;margin-left:2px;align-items:center;padding:0 6px}
.hs div{width:80px;height:19px;background:#cdcdcd;margin:0 auto 0 8px}
.hs svg:last-child{margin-right:21px}

.dialog{position:absolute;left:455px;top:55px;width:547px;height:623px;background:#fff;border:1px solid #6d6d6d;box-shadow:0 4px 18px rgba(0,0,0,.4);color:#111}
.dbar{display:flex;justify-content:space-between;height:50px;padding:8px 16px 0 9px}
.dr{width:20px;height:20px;background:#e3eefa;padding:2px 3px}
.dbar>svg{margin-top:-5px}
.dgrid{margin:0 7px 0 13px;height:500px;border:1px solid #6a8fb5;background:#f0f0f0}
.dhead{display:flex;height:31px;background:linear-gradient(#fff 40%,#f2f4f6);border-bottom:1px solid #d5d5d5;line-height:31px;letter-spacing:-.1px}
.dhead i{width:7px;border-right:1px solid #e2e2e2}
.dhead span{width:232px;padding-left:6px;border-right:1px solid #dcdfe2}
.dhead span+span{width:131px;padding-left:5px}
.dbody{margin-left:7px;background:#fff;border-left:1px solid #d5d5d5;letter-spacing:-.12px}
.dbody div{display:flex;height:22.400px;line-height:21.800px}
.dbody span{width:231px;padding-left:3px}
.dbody span+span{letter-spacing:-.25px}
.dbtns{display:flex;gap:6px;margin:21px 0 0 26px}
.dbtns div{width:161.500px;height:37px;border:1px solid #707070;background:#ddd;text-align:center;line-height:37px}

.status{display:flex;align-items:center;background:#ccc;padding-left:2px}
.msg{width:680px;color:#111;padding-top:4px;letter-spacing:-.17px}
.status>svg{margin-top:1px}
.scombo{width:254px;height:23px;background:#fff;border:1px solid #ddd;display:flex;align-items:center;justify-content:flex-end;padding-right:4px;margin:1px 0 0 7px;color:#777}
.status .c1+svg{margin-left:8px}
.z{width:22px;margin:4px 0 0 6px;color:#222}
.g2{margin-left:14px}
.c2{margin-left:6px;justify-content:space-between;padding-left:1px}
.g3{margin-left:284px}
.status .g3+.z{margin-left:-10px}

.taskbar{display:flex;align-items:center;background:#d6d6d6}
.taskbar div{width:46px;height:38px;display:grid;place-items:center;flex:none}
.taskbar div svg{width:20px;height:20px}
.taskbar .st{width:45px}
.taskbar .last{margin-right:3px}
.taskbar .act{background:linear-gradient(#e4008c,#e4008c) center bottom/36px 3px no-repeat}
.taskbar .on{background:linear-gradient(#e4008c,#e4008c) center bottom/46px 3px no-repeat #efefef;margin:0 1px 0 -1px}
.ol{font:700 10px "Open Sans",sans-serif;fill:#fff;letter-spacing:0}
.ser{font:700 14px "Liberation Serif",serif}
.tray1{margin-left:108px}
.temp{width:44px;margin-left:10px;font-size:16px}
.tray2{margin-left:-1px}
.clock{margin-left:10px;width:49px}
.tray3{margin-left:10px}
```
